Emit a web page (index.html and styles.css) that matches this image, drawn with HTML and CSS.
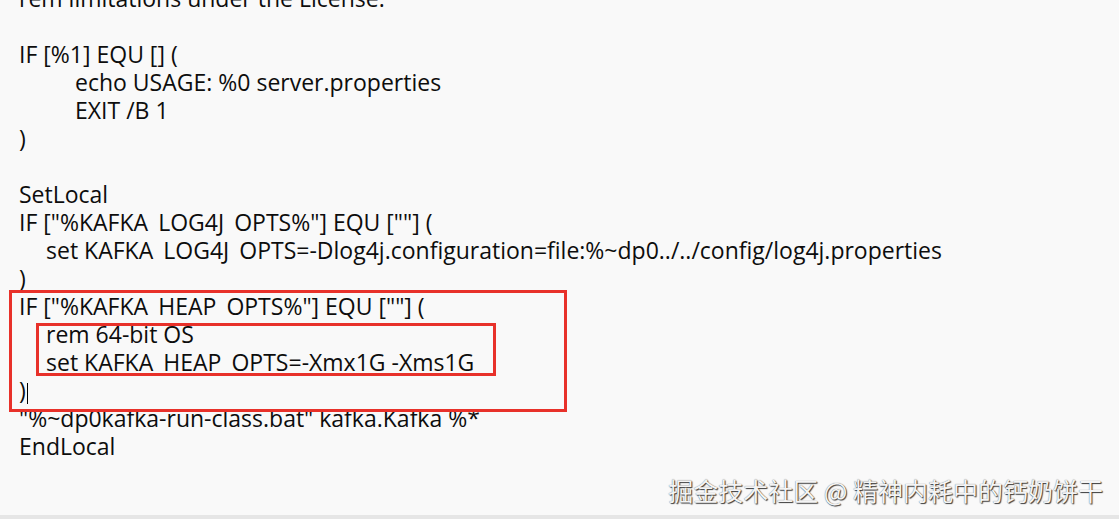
FILE: index.html
```html
<!DOCTYPE html>
<html lang="en">
<head>
<meta charset="utf-8">
<title>kafka-server-start.bat</title>
<link rel="stylesheet" href="styles.css">
</head>
<body>
<div class="window">
  <div class="editor">
    <div class="code">
      <div class="line">rem limitations under the License.</div>
      <div class="line"></div>
      <div class="line">IF [%1] EQU [] (</div>
      <div class="line tab">echo USAGE: %0 server.properties</div>
      <div class="line tab">EXIT /B 1</div>
      <div class="line">)</div>
      <div class="line"></div>
      <div class="line">SetLocal</div>
      <div class="line">IF ["%KAFKA<span class="us">_</span>LOG4J<span class="us">_</span>OPTS%"] EQU [""] (</div>
      <div class="line sp4">set KAFKA<span class="us">_</span>LOG4J<span class="us">_</span>OPTS=-Dlog4j.configuration=file:%~dp0../../config/log4j.properties</div>
      <div class="line">)</div>
      <div class="line">IF ["%KAFKA<span class="us">_</span>HEAP<span class="us">_</span>OPTS%"] EQU [""] (</div>
      <div class="line sp4">rem 64-bit OS</div>
      <div class="line sp4">set KAFKA<span class="us">_</span>HEAP<span class="us">_</span>OPTS=-Xmx1G -Xms1G</div>
      <div class="line">)<span class="caret"></span></div>
      <div class="line">"%~dp0kafka-run-class.bat" kafka.Kafka %*</div>
      <div class="line">EndLocal</div>
    </div>
    <div class="mark mark-outer"></div>
    <div class="mark mark-inner"></div>
    <div class="watermark">掘金技术社区 @ 精神内耗中的钙奶饼干</div>
  </div>
  <div class="statusbar"></div>
</div>
</body>
</html>
```

FILE: styles.css
```css
html, body {
  margin: 0;
  padding: 0;
  height: 100%;
}
body {
  background: #f9f9f9;
  overflow: hidden;
}
.window {
  display: flex;
  flex-direction: column;
  height: 519px;
}
.editor {
  position: relative;
  flex: 1;
  overflow: hidden;
  background: #f9f9f9;
}
.code {
  margin-top: -16px;
  padding-left: 19px;
  font-family: "Open Sans", "Noto Sans", sans-serif;
  font-size: 23px;
  line-height: 28px;
  color: #0d0d0d;
}
.line {
  height: 28px;
  white-space: pre;
}
.tab {
  padding-left: 56px;
}
.sp4 {
  padding-left: 27px;
}
.us {
  color: transparent;
}
.caret {
  display: inline-block;
  width: 1px;
  height: 21px;
  background: #000;
  vertical-align: -5px;
  margin-left: 1px;
}
.mark {
  position: absolute;
  border: 3px solid #e8312a;
  box-sizing: border-box;
}
.mark-outer {
  left: 9px;
  top: 290px;
  width: 558px;
  height: 122px;
}
.mark-inner {
  left: 36px;
  top: 323px;
  width: 460px;
  height: 53px;
}
.watermark {
  position: absolute;
  right: 16px;
  bottom: 10px;
  font-family: "Noto Sans CJK SC", sans-serif;
  font-size: 25px;
  line-height: 30px;
  color: #f4f4f4;
  text-shadow: 1px 1px 1px rgba(0, 0, 0, 0.75), 0 0 1px rgba(0, 0, 0, 0.6);
}
.statusbar {
  height: 4px;
  background: #e6e6e6;
}
```
